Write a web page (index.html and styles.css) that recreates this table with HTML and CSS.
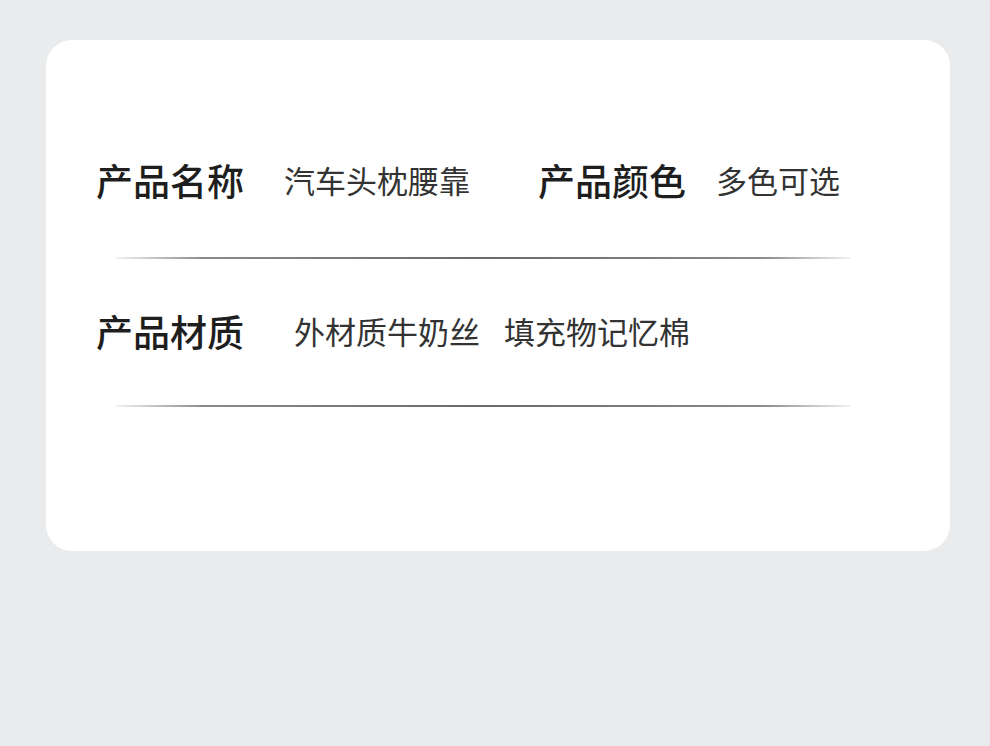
FILE: index.html
```html
<!doctype html>
<html>
  <head>
    <meta charset="utf-8">
    <title>产品信息</title>
    <link rel="stylesheet" href="styles.css">
  </head>
  <body>
    <div class="card">
      <div class="row">
        <span class="label">产品名称</span>
        <span class="value name-value">汽车头枕腰靠</span>
        <span class="label color-label">产品颜色</span>
        <span class="value color-value">多色可选</span>
      </div>
      <div class="divider"></div>
      <div class="row row-material">
        <span class="label">产品材质</span>
        <span class="value outer-value">外材质牛奶丝</span>
        <span class="value fill-value">填充物记忆棉</span>
      </div>
      <div class="divider divider-last"></div>
    </div>
  </body>
</html>
```

FILE: styles.css
```css
html {
  box-sizing: border-box;
}
*, *:before, *:after {
  box-sizing: inherit;
}

html, body {
  margin: 0;
  padding: 0;
  width: 100%;
  height: 100%;
  background-color: #e9ebec;
  font-family: "Noto Sans CJK SC", "Noto Sans", sans-serif;
}

body {
  padding: 40px 40px 0 46px;
}

.card {
  width: 904px;
  height: 511px;
  background-color: #fff;
  border-radius: 26px;
  padding: 110px 0 0 50px;
}

.row {
  display: flex;
  align-items: center;
  height: 60px;
  white-space: nowrap;
}

.label {
  font-size: 37px;
  font-weight: 500;
  color: #1e1e1e;
  line-height: 60px;
}

.value {
  font-size: 31px;
  color: #333;
  line-height: 60px;
}

.name-value {
  margin-left: 40px;
}
.color-label {
  margin-left: 68px;
}
.color-value {
  margin-left: 30px;
}
.outer-value {
  margin-left: 50px;
}
.fill-value {
  margin-left: 24px;
}

.divider {
  width: 734px;
  height: 2px;
  margin: 47px 0 0 20px;
  background: linear-gradient(to right, rgba(120,120,120,0.1), #8a8a8a 12%, #6a6a6a 50%, #8a8a8a 88%, rgba(120,120,120,0.1));
}

.row-material {
  margin-top: 42px;
}

.divider-last {
  margin-top: 44px;
}
```
